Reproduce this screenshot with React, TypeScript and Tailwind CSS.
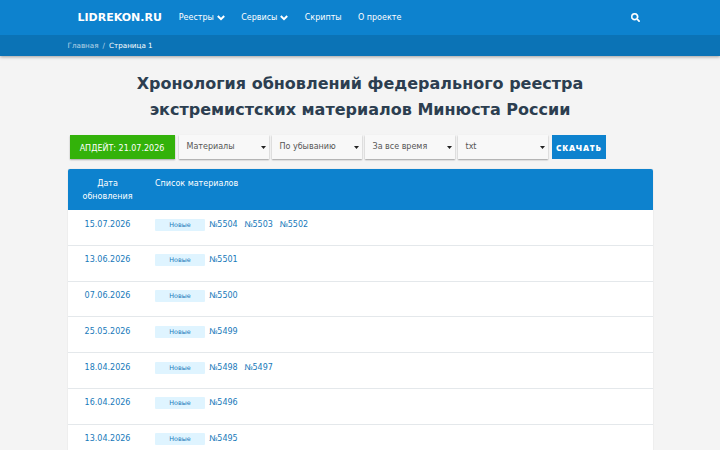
import { FaSearch } from 'react-icons/fa';

type Update = {
  date: string;
  items: number[];
};

const updates: Update[] = [
  { date: '15.07.2026', items: [5504, 5503, 5502] },
  { date: '13.06.2026', items: [5501] },
  { date: '07.06.2026', items: [5500] },
  { date: '25.05.2026', items: [5499] },
  { date: '18.04.2026', items: [5498, 5497] },
  { date: '16.04.2026', items: [5496] },
  { date: '13.04.2026', items: [5495] },
];

const menu = [
  { label: 'Реестры', dropdown: true },
  { label: 'Сервисы', dropdown: true },
  { label: 'Скрипты', dropdown: false },
  { label: 'О проекте', dropdown: false },
];

const filters = ['Материалы', 'По убыванию', 'За все время', 'txt'];

function Chevron() {
  return (
    <svg viewBox="0 0 8 8" className="h-2 w-2 fill-none stroke-white stroke-2">
      <path d="M.8 2 4 5.2 7.2 2" />
    </svg>
  );
}

function Header() {
  return (
    <header className="shadow-[0_1px_3px_rgba(0,0,0,0.35)]">
      <nav className="h-[35px] bg-[#0d82ce]">
        <div className="mx-auto flex h-full w-[585px] items-center pl-2.5 text-white">
          <a href="#" className="w-[101.3px] text-[11px] font-bold">
            LIDREKON.RU
          </a>
          <ul className="flex gap-[16.3px]">
            {menu.map((item) => (
              <li key={item.label} className="flex items-center gap-[3px]">
                <a href="#">{item.label}</a>
                {item.dropdown && <Chevron />}
              </li>
            ))}
          </ul>
          <FaSearch className="mr-[13px] ml-auto h-[9px] w-[9px] stroke-white stroke-[20]" />
        </div>
      </nav>
      <div className="h-[21px] bg-[#0b73b6]">
        <div className="mx-auto flex h-full w-[585px] items-center gap-1 text-[7.2px] text-white">
          <a href="#" className="text-white/70">
            Главная
          </a>
          <span className="text-white/70">/</span>
          <span>Страница 1</span>
        </div>
      </div>
    </header>
  );
}

function Select({ value }: { value: string }) {
  return (
    <button className="flex h-6 w-[90px] items-center justify-between bg-[#f8f8f8] pr-[3px] pb-[2px] pl-2 text-[#555] shadow-[0_1px_1.5px_rgba(0,0,0,0.35)]">
      {value}
      <svg viewBox="0 0 5 3" className="mt-[2px] h-[3px] w-[5px] fill-[#222]">
        <path d="M0 0h5L2.5 3z" />
      </svg>
    </button>
  );
}

export default function App() {
  return (
    <div className="h-[450px] overflow-hidden bg-[#f4f4f4] font-['DejaVu_Sans',sans-serif] text-[8px] leading-[13px]">
      <Header />
      <main className="mx-auto w-[585px]">
        <h1 className="pt-[15px] text-center text-base leading-[25.6px] font-bold text-[#2c3e50]">
          Хронология обновлений федерального реестра
          <br />
          экстремистских материалов Минюста России
        </h1>
        <div className="mt-[13px] flex gap-[3px] pl-[2px]">
          <div className="mr-px flex h-6 w-[105px] items-center justify-center bg-[#33b20a] pt-[2px] text-white shadow-[0_1px_1.5px_rgba(0,0,0,0.3)]">
            АПДЕЙТ: 21.07.2026
          </div>
          {filters.map((filter) => (
            <Select key={filter} value={filter} />
          ))}
          <button className="ml-[1.2px] h-6 w-[54.5px] bg-[#0d82ce] font-['Open_Sans',sans-serif] text-[8.4px] font-extrabold tracking-[0.8px] text-white">
            СКАЧАТЬ
          </button>
        </div>
        <div className="mt-[10px] overflow-hidden rounded-t-xs bg-white shadow-[0_0_1px_rgba(0,0,0,0.25)]">
          <div className="flex h-[41px] bg-[#0d82ce] pt-[7.4px] text-white">
            <div className="w-20 text-center">
              Дата
              <br />
              обновления
            </div>
            <div className="pl-[7.5px]">Список материалов</div>
          </div>
          {updates.map((update) => (
            <div
              key={update.date}
              className="flex h-[35.75px] items-start border-b border-[#e4e8eb] pt-[7.5px] text-[#1779ba]">
              <div className="w-20 text-center">{update.date}</div>
              <span className="mt-px mr-1 ml-[7.5px] flex h-3 w-[50px] items-center justify-center rounded-[1px] bg-[#dff4ff] pt-px text-[6.4px]">
                Новые
              </span>
              <div className="flex gap-[6.5px]">
                {update.items.map((item) => (
                  <a key={item} href="#">
                    №{item}
                  </a>
                ))}
              </div>
            </div>
          ))}
        </div>
      </main>
    </div>
  );
}
